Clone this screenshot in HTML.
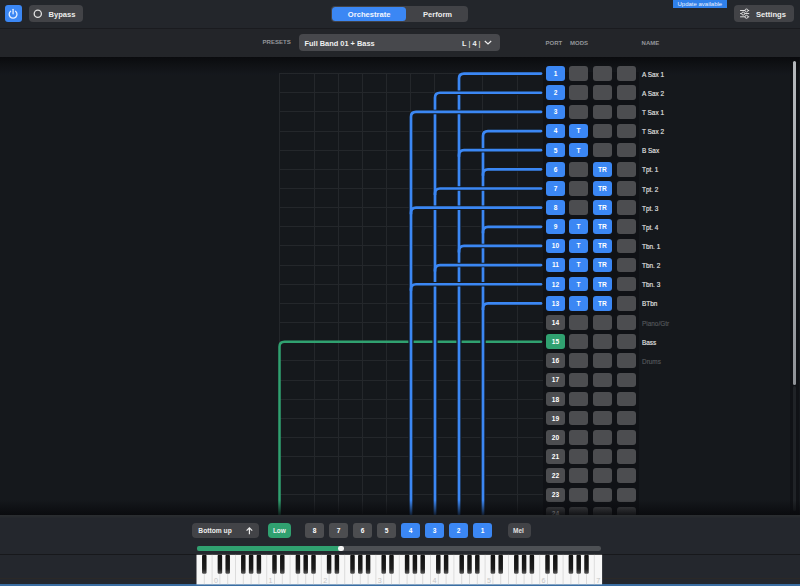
<!DOCTYPE html>
<html><head><meta charset="utf-8"><style>
*{margin:0;padding:0;box-sizing:border-box}
html,body{width:800px;height:586px;overflow:hidden;background:#15181c;font-family:"Liberation Sans",sans-serif}
.a{position:absolute}
.btn{position:absolute;border-radius:4px;background:#424347;color:#ececec;font-weight:bold}
.t{position:absolute;white-space:nowrap;line-height:1}
.pb{position:absolute;width:19px;height:14.6px;border-radius:3px;color:#fff;font-weight:bold;font-size:6.6px;display:flex;align-items:center;justify-content:center}
.nm{position:absolute;left:642px;font-size:7.3px;-webkit-text-stroke:0.15px currentColor;transform:scaleX(0.88);transform-origin:0 0;color:#e4e4e4;line-height:1;white-space:nowrap}
</style></head><body>

<div class="a" style="left:0;top:0;width:800px;height:28px;background:#23262b"></div>
<div class="a" style="left:0;top:28px;width:800px;height:1px;background:#1a1b1f"></div>
<div class="a" style="left:0;top:29px;width:800px;height:28px;background:#232529"></div>
<div class="a" style="left:0;top:57px;width:800px;height:18px;background:linear-gradient(#0a0b0e,#0f1114 40%,#15181d)"></div>
<div class="btn" style="left:5px;top:5px;width:17px;height:17px;border-radius:3px;background:#3b87f4"></div>
<svg class="a" style="left:5px;top:5px" width="17" height="17" viewBox="0 0 17 17"><path d="M5.6 6.3 A3.9 3.9 0 1 0 10.55 6.3" fill="none" stroke="#e6f0ff" stroke-width="1.3" stroke-linecap="round"/><line x1="8.07" y1="4.3" x2="8.07" y2="8.8" stroke="#e6f0ff" stroke-width="1.3" stroke-linecap="round"/></svg>
<div class="btn" style="left:29px;top:5px;width:54px;height:17px"></div>
<svg class="a" style="left:29px;top:5px" width="20" height="17"><circle cx="8.8" cy="8.7" r="3.6" fill="none" stroke="#e0e0e0" stroke-width="1.3"/></svg>
<div class="t" style="left:48.5px;top:10.9px;font-size:7.6px;font-weight:bold;color:#ececec">Bypass</div>
<div class="btn" style="left:331px;top:5.5px;width:137px;height:16.6px"></div>
<div class="btn" style="left:332px;top:6.5px;width:74px;height:14.5px;border-radius:3.5px;background:#3b87f4"></div>
<div class="t" style="left:347.8px;top:10.6px;font-size:7.6px;font-weight:bold;color:#f2f6ff">Orchestrate</div>
<div class="t" style="left:423px;top:10.6px;font-size:7.6px;font-weight:bold;color:#ececec">Perform</div>
<div class="a" style="left:673px;top:0;width:54px;height:8px;background:#2f80ea"></div>
<div class="t" style="left:677.5px;top:1px;font-size:6px;color:#e8f0ff">Update available</div>
<div class="btn" style="left:734px;top:5px;width:60px;height:17px"></div>
<svg class="a" style="left:738px;top:7px" width="13" height="13" viewBox="0 0 13 13" fill="none" stroke="#dedede" stroke-width="1">
<line x1="2.1" y1="3.5" x2="11.2" y2="3.5"/><line x1="2.1" y1="6.55" x2="11.2" y2="6.55"/><line x1="2.1" y1="9.8" x2="11.2" y2="9.8"/>
<circle cx="8.5" cy="3.5" r="1.5" fill="#424347"/><circle cx="5.2" cy="6.55" r="1.5" fill="#424347"/><circle cx="8.5" cy="9.8" r="1.5" fill="#424347"/></svg>
<div class="t" style="left:756px;top:10.8px;font-size:7.6px;font-weight:bold;color:#ececec">Settings</div>
<div class="t" style="left:262.6px;top:39.4px;font-size:6.1px;font-weight:bold;color:#94969a;letter-spacing:-0.05px">PRESETS</div>
<div class="btn" style="left:299px;top:34px;width:201px;height:17px;background:#47484c"></div>
<div class="t" style="left:304.6px;top:40.2px;font-size:7.4px;font-weight:bold;color:#f0f0f0">Full Band 01 + Bass</div>
<div class="t" style="left:462px;top:40.2px;font-size:7.4px;font-weight:bold;color:#f0f0f0">L <span style="font-weight:normal">|</span> 4 <span style="font-weight:normal">|</span></div>
<svg class="a" style="left:482px;top:37px" width="12" height="10"><path d="M2.8 4 L6 7 L9.2 4" fill="none" stroke="#f0f0f0" stroke-width="1.1"/></svg>
<div class="t" style="left:545.6px;top:39.85px;font-size:6px;font-weight:bold;color:#94969a;letter-spacing:0px">PORT</div>
<div class="t" style="left:570px;top:39.85px;font-size:6px;font-weight:bold;color:#94969a;letter-spacing:0px">MODS</div>
<div class="t" style="left:641.6px;top:39.85px;font-size:6px;font-weight:bold;color:#94969a;letter-spacing:0px">NAME</div>
<svg class="a" style="left:0;top:0" width="800" height="586">
<line x1="279.5" y1="73" x2="279.5" y2="515" stroke="#24272b" stroke-width="1"/>
<line x1="314.5" y1="73" x2="314.5" y2="515" stroke="#24272b" stroke-width="1"/>
<line x1="338.5" y1="73" x2="338.5" y2="515" stroke="#24272b" stroke-width="1"/>
<line x1="362.5" y1="73" x2="362.5" y2="515" stroke="#24272b" stroke-width="1"/>
<line x1="386.5" y1="73" x2="386.5" y2="515" stroke="#24272b" stroke-width="1"/>
<line x1="410.5" y1="73" x2="410.5" y2="515" stroke="#24272b" stroke-width="1"/>
<line x1="434.5" y1="73" x2="434.5" y2="515" stroke="#24272b" stroke-width="1"/>
<line x1="458.5" y1="73" x2="458.5" y2="515" stroke="#24272b" stroke-width="1"/>
<line x1="482.5" y1="73" x2="482.5" y2="515" stroke="#24272b" stroke-width="1"/>
<line x1="517.5" y1="73" x2="517.5" y2="515" stroke="#24272b" stroke-width="1"/>
<line x1="279" y1="73.5" x2="543" y2="73.5" stroke="#24272b" stroke-width="1"/>
<line x1="279" y1="92.5" x2="543" y2="92.5" stroke="#24272b" stroke-width="1"/>
<line x1="279" y1="111.5" x2="543" y2="111.5" stroke="#24272b" stroke-width="1"/>
<line x1="279" y1="131.5" x2="543" y2="131.5" stroke="#24272b" stroke-width="1"/>
<line x1="279" y1="150.5" x2="543" y2="150.5" stroke="#24272b" stroke-width="1"/>
<line x1="279" y1="169.5" x2="543" y2="169.5" stroke="#24272b" stroke-width="1"/>
<line x1="279" y1="188.5" x2="543" y2="188.5" stroke="#24272b" stroke-width="1"/>
<line x1="279" y1="207.5" x2="543" y2="207.5" stroke="#24272b" stroke-width="1"/>
<line x1="279" y1="226.5" x2="543" y2="226.5" stroke="#24272b" stroke-width="1"/>
<line x1="279" y1="245.5" x2="543" y2="245.5" stroke="#24272b" stroke-width="1"/>
<line x1="279" y1="265.5" x2="543" y2="265.5" stroke="#24272b" stroke-width="1"/>
<line x1="279" y1="284.5" x2="543" y2="284.5" stroke="#24272b" stroke-width="1"/>
<line x1="279" y1="303.5" x2="543" y2="303.5" stroke="#24272b" stroke-width="1"/>
<line x1="279" y1="322.5" x2="543" y2="322.5" stroke="#24272b" stroke-width="1"/>
<line x1="279" y1="341.5" x2="543" y2="341.5" stroke="#24272b" stroke-width="1"/>
<line x1="279" y1="360.5" x2="543" y2="360.5" stroke="#24272b" stroke-width="1"/>
<line x1="279" y1="380.5" x2="543" y2="380.5" stroke="#24272b" stroke-width="1"/>
<line x1="279" y1="399.5" x2="543" y2="399.5" stroke="#24272b" stroke-width="1"/>
<line x1="279" y1="418.5" x2="543" y2="418.5" stroke="#24272b" stroke-width="1"/>
<line x1="279" y1="437.5" x2="543" y2="437.5" stroke="#24272b" stroke-width="1"/>
<line x1="279" y1="456.5" x2="543" y2="456.5" stroke="#24272b" stroke-width="1"/>
<line x1="279" y1="475.5" x2="543" y2="475.5" stroke="#24272b" stroke-width="1"/>
<line x1="279" y1="494.5" x2="543" y2="494.5" stroke="#24272b" stroke-width="1"/>
<line x1="279" y1="514.5" x2="543" y2="514.5" stroke="#24272b" stroke-width="1"/>
<path d="M541 341.70 H284.50 Q279.50 341.70 279.50 346.70 V515" fill="none" stroke="#30a170" stroke-width="2.5" stroke-linecap="round"/>
<path d="M541 73.60 H465.50 M459.00 80.10 V515" fill="none" stroke="#15181c" stroke-width="4.5"/>
<path d="M541 73.60 H464.00 Q459.00 73.60 459.00 78.60 V515" fill="none" stroke="#3b87f4" stroke-width="2.7" stroke-linecap="round"/>
<path d="M541 92.75 H441.50 M435.00 99.25 V515" fill="none" stroke="#15181c" stroke-width="4.5"/>
<path d="M541 92.75 H440.00 Q435.00 92.75 435.00 97.75 V515" fill="none" stroke="#3b87f4" stroke-width="2.7" stroke-linecap="round"/>
<path d="M541 111.90 H417.50 M411.00 118.40 V515" fill="none" stroke="#15181c" stroke-width="4.5"/>
<path d="M541 111.90 H416.00 Q411.00 111.90 411.00 116.90 V515" fill="none" stroke="#3b87f4" stroke-width="2.7" stroke-linecap="round"/>
<path d="M541 131.05 H489.50 M483.00 137.55 V515" fill="none" stroke="#15181c" stroke-width="4.5"/>
<path d="M541 131.05 H488.00 Q483.00 131.05 483.00 136.05 V515" fill="none" stroke="#3b87f4" stroke-width="2.7" stroke-linecap="round"/>
<path d="M541 150.20 H465.50 M459.00 156.70 V515" fill="none" stroke="#15181c" stroke-width="4.5"/>
<path d="M541 150.20 H464.00 Q459.00 150.20 459.00 155.20 V515" fill="none" stroke="#3b87f4" stroke-width="2.7" stroke-linecap="round"/>
<path d="M541 169.35 H489.50 M483.00 175.85 V515" fill="none" stroke="#15181c" stroke-width="4.5"/>
<path d="M541 169.35 H488.00 Q483.00 169.35 483.00 174.35 V515" fill="none" stroke="#3b87f4" stroke-width="2.7" stroke-linecap="round"/>
<path d="M541 188.50 H441.50 M435.00 195.00 V515" fill="none" stroke="#15181c" stroke-width="4.5"/>
<path d="M541 188.50 H440.00 Q435.00 188.50 435.00 193.50 V515" fill="none" stroke="#3b87f4" stroke-width="2.7" stroke-linecap="round"/>
<path d="M541 207.65 H417.50 M411.00 214.15 V515" fill="none" stroke="#15181c" stroke-width="4.5"/>
<path d="M541 207.65 H416.00 Q411.00 207.65 411.00 212.65 V515" fill="none" stroke="#3b87f4" stroke-width="2.7" stroke-linecap="round"/>
<path d="M541 226.80 H489.50 M483.00 233.30 V515" fill="none" stroke="#15181c" stroke-width="4.5"/>
<path d="M541 226.80 H488.00 Q483.00 226.80 483.00 231.80 V515" fill="none" stroke="#3b87f4" stroke-width="2.7" stroke-linecap="round"/>
<path d="M541 245.95 H465.50 M459.00 252.45 V515" fill="none" stroke="#15181c" stroke-width="4.5"/>
<path d="M541 245.95 H464.00 Q459.00 245.95 459.00 250.95 V515" fill="none" stroke="#3b87f4" stroke-width="2.7" stroke-linecap="round"/>
<path d="M541 265.10 H441.50 M435.00 271.60 V515" fill="none" stroke="#15181c" stroke-width="4.5"/>
<path d="M541 265.10 H440.00 Q435.00 265.10 435.00 270.10 V515" fill="none" stroke="#3b87f4" stroke-width="2.7" stroke-linecap="round"/>
<path d="M541 284.25 H417.50 M411.00 290.75 V515" fill="none" stroke="#15181c" stroke-width="4.5"/>
<path d="M541 284.25 H416.00 Q411.00 284.25 411.00 289.25 V515" fill="none" stroke="#3b87f4" stroke-width="2.7" stroke-linecap="round"/>
<path d="M541 303.40 H489.50 M483.00 309.90 V515" fill="none" stroke="#15181c" stroke-width="4.5"/>
<path d="M541 303.40 H488.00 Q483.00 303.40 483.00 308.40 V515" fill="none" stroke="#3b87f4" stroke-width="2.7" stroke-linecap="round"/>
</svg>
<div class="a" style="left:543px;top:72px;width:96px;height:443px;background:#101216"></div>
<div class="pb" style="left:546px;top:66.20px;background:#3b87f4">1</div>
<div class="pb" style="left:569px;top:66.20px;background:#4c4d50"></div>
<div class="pb" style="left:593px;top:66.20px;background:#4c4d50"></div>
<div class="pb" style="left:617px;top:66.20px;background:#4c4d50"></div>
<div class="nm" style="top:70.63px;color:#e4e4e4">A Sax 1</div>
<div class="pb" style="left:546px;top:85.35px;background:#3b87f4">2</div>
<div class="pb" style="left:569px;top:85.35px;background:#4c4d50"></div>
<div class="pb" style="left:593px;top:85.35px;background:#4c4d50"></div>
<div class="pb" style="left:617px;top:85.35px;background:#4c4d50"></div>
<div class="nm" style="top:89.78px;color:#e4e4e4">A Sax 2</div>
<div class="pb" style="left:546px;top:104.50px;background:#3b87f4">3</div>
<div class="pb" style="left:569px;top:104.50px;background:#4c4d50"></div>
<div class="pb" style="left:593px;top:104.50px;background:#4c4d50"></div>
<div class="pb" style="left:617px;top:104.50px;background:#4c4d50"></div>
<div class="nm" style="top:108.93px;color:#e4e4e4">T Sax 1</div>
<div class="pb" style="left:546px;top:123.65px;background:#3b87f4">4</div>
<div class="pb" style="left:569px;top:123.65px;background:#3b87f4">T</div>
<div class="pb" style="left:593px;top:123.65px;background:#4c4d50"></div>
<div class="pb" style="left:617px;top:123.65px;background:#4c4d50"></div>
<div class="nm" style="top:128.08px;color:#e4e4e4">T Sax 2</div>
<div class="pb" style="left:546px;top:142.80px;background:#3b87f4">5</div>
<div class="pb" style="left:569px;top:142.80px;background:#3b87f4">T</div>
<div class="pb" style="left:593px;top:142.80px;background:#4c4d50"></div>
<div class="pb" style="left:617px;top:142.80px;background:#4c4d50"></div>
<div class="nm" style="top:147.23px;color:#e4e4e4">B Sax</div>
<div class="pb" style="left:546px;top:161.95px;background:#3b87f4">6</div>
<div class="pb" style="left:569px;top:161.95px;background:#4c4d50"></div>
<div class="pb" style="left:593px;top:161.95px;background:#3b87f4">TR</div>
<div class="pb" style="left:617px;top:161.95px;background:#4c4d50"></div>
<div class="nm" style="top:166.38px;color:#e4e4e4">Tpt. 1</div>
<div class="pb" style="left:546px;top:181.10px;background:#3b87f4">7</div>
<div class="pb" style="left:569px;top:181.10px;background:#4c4d50"></div>
<div class="pb" style="left:593px;top:181.10px;background:#3b87f4">TR</div>
<div class="pb" style="left:617px;top:181.10px;background:#4c4d50"></div>
<div class="nm" style="top:185.53px;color:#e4e4e4">Tpt. 2</div>
<div class="pb" style="left:546px;top:200.25px;background:#3b87f4">8</div>
<div class="pb" style="left:569px;top:200.25px;background:#4c4d50"></div>
<div class="pb" style="left:593px;top:200.25px;background:#3b87f4">TR</div>
<div class="pb" style="left:617px;top:200.25px;background:#4c4d50"></div>
<div class="nm" style="top:204.68px;color:#e4e4e4">Tpt. 3</div>
<div class="pb" style="left:546px;top:219.40px;background:#3b87f4">9</div>
<div class="pb" style="left:569px;top:219.40px;background:#3b87f4">T</div>
<div class="pb" style="left:593px;top:219.40px;background:#3b87f4">TR</div>
<div class="pb" style="left:617px;top:219.40px;background:#4c4d50"></div>
<div class="nm" style="top:223.83px;color:#e4e4e4">Tpt. 4</div>
<div class="pb" style="left:546px;top:238.55px;background:#3b87f4">10</div>
<div class="pb" style="left:569px;top:238.55px;background:#3b87f4">T</div>
<div class="pb" style="left:593px;top:238.55px;background:#3b87f4">TR</div>
<div class="pb" style="left:617px;top:238.55px;background:#4c4d50"></div>
<div class="nm" style="top:242.98px;color:#e4e4e4">Tbn. 1</div>
<div class="pb" style="left:546px;top:257.70px;background:#3b87f4">11</div>
<div class="pb" style="left:569px;top:257.70px;background:#3b87f4">T</div>
<div class="pb" style="left:593px;top:257.70px;background:#3b87f4">TR</div>
<div class="pb" style="left:617px;top:257.70px;background:#4c4d50"></div>
<div class="nm" style="top:262.13px;color:#e4e4e4">Tbn. 2</div>
<div class="pb" style="left:546px;top:276.85px;background:#3b87f4">12</div>
<div class="pb" style="left:569px;top:276.85px;background:#3b87f4">T</div>
<div class="pb" style="left:593px;top:276.85px;background:#3b87f4">TR</div>
<div class="pb" style="left:617px;top:276.85px;background:#4c4d50"></div>
<div class="nm" style="top:281.28px;color:#e4e4e4">Tbn. 3</div>
<div class="pb" style="left:546px;top:296.00px;background:#3b87f4">13</div>
<div class="pb" style="left:569px;top:296.00px;background:#3b87f4">T</div>
<div class="pb" style="left:593px;top:296.00px;background:#3b87f4">TR</div>
<div class="pb" style="left:617px;top:296.00px;background:#4c4d50"></div>
<div class="nm" style="top:300.43px;color:#e4e4e4">BTbn</div>
<div class="pb" style="left:546px;top:315.15px;background:#4c4d50">14</div>
<div class="pb" style="left:569px;top:315.15px;background:#4c4d50"></div>
<div class="pb" style="left:593px;top:315.15px;background:#4c4d50"></div>
<div class="pb" style="left:617px;top:315.15px;background:#4c4d50"></div>
<div class="nm" style="top:319.58px;color:#55585c">Piano/Gtr</div>
<div class="pb" style="left:546px;top:334.30px;background:#30a170">15</div>
<div class="pb" style="left:569px;top:334.30px;background:#4c4d50"></div>
<div class="pb" style="left:593px;top:334.30px;background:#4c4d50"></div>
<div class="pb" style="left:617px;top:334.30px;background:#4c4d50"></div>
<div class="nm" style="top:338.73px;color:#e4e4e4">Bass</div>
<div class="pb" style="left:546px;top:353.45px;background:#4c4d50">16</div>
<div class="pb" style="left:569px;top:353.45px;background:#4c4d50"></div>
<div class="pb" style="left:593px;top:353.45px;background:#4c4d50"></div>
<div class="pb" style="left:617px;top:353.45px;background:#4c4d50"></div>
<div class="nm" style="top:357.88px;color:#55585c">Drums</div>
<div class="pb" style="left:546px;top:372.60px;background:#4c4d50">17</div>
<div class="pb" style="left:569px;top:372.60px;background:#4c4d50"></div>
<div class="pb" style="left:593px;top:372.60px;background:#4c4d50"></div>
<div class="pb" style="left:617px;top:372.60px;background:#4c4d50"></div>
<div class="pb" style="left:546px;top:391.75px;background:#4c4d50">18</div>
<div class="pb" style="left:569px;top:391.75px;background:#4c4d50"></div>
<div class="pb" style="left:593px;top:391.75px;background:#4c4d50"></div>
<div class="pb" style="left:617px;top:391.75px;background:#4c4d50"></div>
<div class="pb" style="left:546px;top:410.90px;background:#4c4d50">19</div>
<div class="pb" style="left:569px;top:410.90px;background:#4c4d50"></div>
<div class="pb" style="left:593px;top:410.90px;background:#4c4d50"></div>
<div class="pb" style="left:617px;top:410.90px;background:#4c4d50"></div>
<div class="pb" style="left:546px;top:430.05px;background:#4c4d50">20</div>
<div class="pb" style="left:569px;top:430.05px;background:#4c4d50"></div>
<div class="pb" style="left:593px;top:430.05px;background:#4c4d50"></div>
<div class="pb" style="left:617px;top:430.05px;background:#4c4d50"></div>
<div class="pb" style="left:546px;top:449.20px;background:#4c4d50">21</div>
<div class="pb" style="left:569px;top:449.20px;background:#4c4d50"></div>
<div class="pb" style="left:593px;top:449.20px;background:#4c4d50"></div>
<div class="pb" style="left:617px;top:449.20px;background:#4c4d50"></div>
<div class="pb" style="left:546px;top:468.35px;background:#4c4d50">22</div>
<div class="pb" style="left:569px;top:468.35px;background:#4c4d50"></div>
<div class="pb" style="left:593px;top:468.35px;background:#4c4d50"></div>
<div class="pb" style="left:617px;top:468.35px;background:#4c4d50"></div>
<div class="pb" style="left:546px;top:487.50px;background:#4c4d50">23</div>
<div class="pb" style="left:569px;top:487.50px;background:#4c4d50"></div>
<div class="pb" style="left:593px;top:487.50px;background:#4c4d50"></div>
<div class="pb" style="left:617px;top:487.50px;background:#4c4d50"></div>
<div class="pb" style="left:546px;top:506.65px;background:#4c4d50">24</div>
<div class="pb" style="left:569px;top:506.65px;background:#4c4d50"></div>
<div class="pb" style="left:593px;top:506.65px;background:#4c4d50"></div>
<div class="pb" style="left:617px;top:506.65px;background:#4c4d50"></div>
<div class="a" style="left:790px;top:57px;width:9px;height:458px;background:rgba(8,9,12,0.35)"></div>
<div class="a" style="left:793px;top:61px;width:3.2px;height:324px;border-radius:1.6px;background:linear-gradient(#b4b7bb,#8f9297)"></div>
<div class="a" style="left:793px;top:386px;width:3.2px;height:125px;border-radius:1.6px;background:#202327"></div>
<div class="a" style="left:0;top:514.5px;width:800px;height:72px;background:#24272d"></div><div class="a" style="left:0;top:514.5px;width:800px;height:3.5px;background:linear-gradient(#2b2e31,#25282d)"></div><div class="a" style="left:0;top:578px;width:800px;height:1px;background:#2a2827"></div>
<div class="a" style="left:0;top:500px;width:800px;height:14.5px;background:linear-gradient(rgba(8,9,12,0),rgba(8,9,12,0.85))"></div>
<div class="a" style="left:0;top:554px;width:800px;height:1px;background:#17181b"></div>
<div class="a" style="left:0;top:584px;width:800px;height:2.3px;background:#3a6ea3"></div>
<div class="btn" style="left:192px;top:523px;width:67px;height:14.5px"></div>
<div class="t" style="left:198.3px;top:527.6px;font-size:6.7px;font-weight:bold;color:#ececec">Bottom up</div>
<svg class="a" style="left:244px;top:524px" width="10" height="12"><path d="M5.4 10.2 V4 M2.6 6.6 L5.4 3.8 L8.2 6.6" fill="none" stroke="#ececec" stroke-width="1.2"/></svg>
<div class="btn" style="left:268px;top:523px;width:23px;height:14.5px;background:#30a170"></div>
<div class="t" style="left:272.9px;top:527.8px;font-size:6.5px;font-weight:bold;color:#f0f0f0">Low</div>
<div class="pb" style="left:305px;top:523px;height:14.5px;background:#4c4d50">8</div>
<div class="pb" style="left:329px;top:523px;height:14.5px;background:#4c4d50">7</div>
<div class="pb" style="left:353px;top:523px;height:14.5px;background:#4c4d50">6</div>
<div class="pb" style="left:377px;top:523px;height:14.5px;background:#4c4d50">5</div>
<div class="pb" style="left:401px;top:523px;height:14.5px;background:#3b87f4">4</div>
<div class="pb" style="left:425px;top:523px;height:14.5px;background:#3b87f4">3</div>
<div class="pb" style="left:449px;top:523px;height:14.5px;background:#3b87f4">2</div>
<div class="pb" style="left:473px;top:523px;height:14.5px;background:#3b87f4">1</div>
<div class="btn" style="left:507.5px;top:523px;width:23px;height:14.5px"></div>
<div class="t" style="left:513px;top:527.8px;font-size:6.5px;font-weight:bold;color:#e0e0e0">Mel</div>
<div class="a" style="left:197px;top:546.3px;width:404px;height:4.5px;border-radius:2.25px;background:#4d5054"></div>
<div class="a" style="left:197px;top:546.3px;width:144px;height:4.5px;border-radius:2.25px;background:#30a170"></div>
<div class="a" style="left:337.6px;top:546.1px;width:6.6px;height:4.8px;border-radius:2.2px;background:#f4f4f4"></div>
<svg class="a" style="left:0;top:0" width="800" height="586">
<rect x="196.5" y="554.8" width="405.59999999999997" height="29.600000000000023" fill="#f7f7f7"/>
<line x1="204.30" y1="554.8" x2="204.30" y2="584.4" stroke="#c9c9c9" stroke-width="0.6"/>
<line x1="212.10" y1="554.8" x2="212.10" y2="584.4" stroke="#c9c9c9" stroke-width="0.6"/>
<line x1="219.90" y1="554.8" x2="219.90" y2="584.4" stroke="#c9c9c9" stroke-width="0.6"/>
<line x1="227.70" y1="554.8" x2="227.70" y2="584.4" stroke="#c9c9c9" stroke-width="0.6"/>
<line x1="235.50" y1="554.8" x2="235.50" y2="584.4" stroke="#c9c9c9" stroke-width="0.6"/>
<line x1="243.30" y1="554.8" x2="243.30" y2="584.4" stroke="#c9c9c9" stroke-width="0.6"/>
<line x1="251.10" y1="554.8" x2="251.10" y2="584.4" stroke="#c9c9c9" stroke-width="0.6"/>
<line x1="258.90" y1="554.8" x2="258.90" y2="584.4" stroke="#c9c9c9" stroke-width="0.6"/>
<line x1="266.70" y1="554.8" x2="266.70" y2="584.4" stroke="#c9c9c9" stroke-width="0.6"/>
<line x1="274.50" y1="554.8" x2="274.50" y2="584.4" stroke="#c9c9c9" stroke-width="0.6"/>
<line x1="282.30" y1="554.8" x2="282.30" y2="584.4" stroke="#c9c9c9" stroke-width="0.6"/>
<line x1="290.10" y1="554.8" x2="290.10" y2="584.4" stroke="#c9c9c9" stroke-width="0.6"/>
<line x1="297.90" y1="554.8" x2="297.90" y2="584.4" stroke="#c9c9c9" stroke-width="0.6"/>
<line x1="305.70" y1="554.8" x2="305.70" y2="584.4" stroke="#c9c9c9" stroke-width="0.6"/>
<line x1="313.50" y1="554.8" x2="313.50" y2="584.4" stroke="#c9c9c9" stroke-width="0.6"/>
<line x1="321.30" y1="554.8" x2="321.30" y2="584.4" stroke="#c9c9c9" stroke-width="0.6"/>
<line x1="329.10" y1="554.8" x2="329.10" y2="584.4" stroke="#c9c9c9" stroke-width="0.6"/>
<line x1="336.90" y1="554.8" x2="336.90" y2="584.4" stroke="#c9c9c9" stroke-width="0.6"/>
<line x1="344.70" y1="554.8" x2="344.70" y2="584.4" stroke="#c9c9c9" stroke-width="0.6"/>
<line x1="352.50" y1="554.8" x2="352.50" y2="584.4" stroke="#c9c9c9" stroke-width="0.6"/>
<line x1="360.30" y1="554.8" x2="360.30" y2="584.4" stroke="#c9c9c9" stroke-width="0.6"/>
<line x1="368.10" y1="554.8" x2="368.10" y2="584.4" stroke="#c9c9c9" stroke-width="0.6"/>
<line x1="375.90" y1="554.8" x2="375.90" y2="584.4" stroke="#c9c9c9" stroke-width="0.6"/>
<line x1="383.70" y1="554.8" x2="383.70" y2="584.4" stroke="#c9c9c9" stroke-width="0.6"/>
<line x1="391.50" y1="554.8" x2="391.50" y2="584.4" stroke="#c9c9c9" stroke-width="0.6"/>
<line x1="399.30" y1="554.8" x2="399.30" y2="584.4" stroke="#c9c9c9" stroke-width="0.6"/>
<line x1="407.10" y1="554.8" x2="407.10" y2="584.4" stroke="#c9c9c9" stroke-width="0.6"/>
<line x1="414.90" y1="554.8" x2="414.90" y2="584.4" stroke="#c9c9c9" stroke-width="0.6"/>
<line x1="422.70" y1="554.8" x2="422.70" y2="584.4" stroke="#c9c9c9" stroke-width="0.6"/>
<line x1="430.50" y1="554.8" x2="430.50" y2="584.4" stroke="#c9c9c9" stroke-width="0.6"/>
<line x1="438.30" y1="554.8" x2="438.30" y2="584.4" stroke="#c9c9c9" stroke-width="0.6"/>
<line x1="446.10" y1="554.8" x2="446.10" y2="584.4" stroke="#c9c9c9" stroke-width="0.6"/>
<line x1="453.90" y1="554.8" x2="453.90" y2="584.4" stroke="#c9c9c9" stroke-width="0.6"/>
<line x1="461.70" y1="554.8" x2="461.70" y2="584.4" stroke="#c9c9c9" stroke-width="0.6"/>
<line x1="469.50" y1="554.8" x2="469.50" y2="584.4" stroke="#c9c9c9" stroke-width="0.6"/>
<line x1="477.30" y1="554.8" x2="477.30" y2="584.4" stroke="#c9c9c9" stroke-width="0.6"/>
<line x1="485.10" y1="554.8" x2="485.10" y2="584.4" stroke="#c9c9c9" stroke-width="0.6"/>
<line x1="492.90" y1="554.8" x2="492.90" y2="584.4" stroke="#c9c9c9" stroke-width="0.6"/>
<line x1="500.70" y1="554.8" x2="500.70" y2="584.4" stroke="#c9c9c9" stroke-width="0.6"/>
<line x1="508.50" y1="554.8" x2="508.50" y2="584.4" stroke="#c9c9c9" stroke-width="0.6"/>
<line x1="516.30" y1="554.8" x2="516.30" y2="584.4" stroke="#c9c9c9" stroke-width="0.6"/>
<line x1="524.10" y1="554.8" x2="524.10" y2="584.4" stroke="#c9c9c9" stroke-width="0.6"/>
<line x1="531.90" y1="554.8" x2="531.90" y2="584.4" stroke="#c9c9c9" stroke-width="0.6"/>
<line x1="539.70" y1="554.8" x2="539.70" y2="584.4" stroke="#c9c9c9" stroke-width="0.6"/>
<line x1="547.50" y1="554.8" x2="547.50" y2="584.4" stroke="#c9c9c9" stroke-width="0.6"/>
<line x1="555.30" y1="554.8" x2="555.30" y2="584.4" stroke="#c9c9c9" stroke-width="0.6"/>
<line x1="563.10" y1="554.8" x2="563.10" y2="584.4" stroke="#c9c9c9" stroke-width="0.6"/>
<line x1="570.90" y1="554.8" x2="570.90" y2="584.4" stroke="#c9c9c9" stroke-width="0.6"/>
<line x1="578.70" y1="554.8" x2="578.70" y2="584.4" stroke="#c9c9c9" stroke-width="0.6"/>
<line x1="586.50" y1="554.8" x2="586.50" y2="584.4" stroke="#c9c9c9" stroke-width="0.6"/>
<line x1="594.30" y1="554.8" x2="594.30" y2="584.4" stroke="#c9c9c9" stroke-width="0.6"/>
<defs><linearGradient id="bk" x1="0" y1="0" x2="0" y2="1"><stop offset="0" stop-color="#111"/><stop offset="0.75" stop-color="#1c1c1c"/><stop offset="1" stop-color="#555"/></linearGradient></defs>
<rect x="202.05" y="554.8" width="4.5" height="19" rx="1.2" fill="url(#bk)"/>
<rect x="217.65" y="554.8" width="4.5" height="19" rx="1.2" fill="url(#bk)"/>
<rect x="225.45" y="554.8" width="4.5" height="19" rx="1.2" fill="url(#bk)"/>
<rect x="241.05" y="554.8" width="4.5" height="19" rx="1.2" fill="url(#bk)"/>
<rect x="248.85" y="554.8" width="4.5" height="19" rx="1.2" fill="url(#bk)"/>
<rect x="256.65" y="554.8" width="4.5" height="19" rx="1.2" fill="url(#bk)"/>
<rect x="272.25" y="554.8" width="4.5" height="19" rx="1.2" fill="url(#bk)"/>
<rect x="280.05" y="554.8" width="4.5" height="19" rx="1.2" fill="url(#bk)"/>
<rect x="295.65" y="554.8" width="4.5" height="19" rx="1.2" fill="url(#bk)"/>
<rect x="303.45" y="554.8" width="4.5" height="19" rx="1.2" fill="url(#bk)"/>
<rect x="311.25" y="554.8" width="4.5" height="19" rx="1.2" fill="url(#bk)"/>
<rect x="326.85" y="554.8" width="4.5" height="19" rx="1.2" fill="url(#bk)"/>
<rect x="334.65" y="554.8" width="4.5" height="19" rx="1.2" fill="url(#bk)"/>
<rect x="350.25" y="554.8" width="4.5" height="19" rx="1.2" fill="url(#bk)"/>
<rect x="358.05" y="554.8" width="4.5" height="19" rx="1.2" fill="url(#bk)"/>
<rect x="365.85" y="554.8" width="4.5" height="19" rx="1.2" fill="url(#bk)"/>
<rect x="381.45" y="554.8" width="4.5" height="19" rx="1.2" fill="url(#bk)"/>
<rect x="389.25" y="554.8" width="4.5" height="19" rx="1.2" fill="url(#bk)"/>
<rect x="404.85" y="554.8" width="4.5" height="19" rx="1.2" fill="url(#bk)"/>
<rect x="412.65" y="554.8" width="4.5" height="19" rx="1.2" fill="url(#bk)"/>
<rect x="420.45" y="554.8" width="4.5" height="19" rx="1.2" fill="url(#bk)"/>
<rect x="436.05" y="554.8" width="4.5" height="19" rx="1.2" fill="url(#bk)"/>
<rect x="443.85" y="554.8" width="4.5" height="19" rx="1.2" fill="url(#bk)"/>
<rect x="459.45" y="554.8" width="4.5" height="19" rx="1.2" fill="url(#bk)"/>
<rect x="467.25" y="554.8" width="4.5" height="19" rx="1.2" fill="url(#bk)"/>
<rect x="475.05" y="554.8" width="4.5" height="19" rx="1.2" fill="url(#bk)"/>
<rect x="490.65" y="554.8" width="4.5" height="19" rx="1.2" fill="url(#bk)"/>
<rect x="498.45" y="554.8" width="4.5" height="19" rx="1.2" fill="url(#bk)"/>
<rect x="514.05" y="554.8" width="4.5" height="19" rx="1.2" fill="url(#bk)"/>
<rect x="521.85" y="554.8" width="4.5" height="19" rx="1.2" fill="url(#bk)"/>
<rect x="529.65" y="554.8" width="4.5" height="19" rx="1.2" fill="url(#bk)"/>
<rect x="545.25" y="554.8" width="4.5" height="19" rx="1.2" fill="url(#bk)"/>
<rect x="553.05" y="554.8" width="4.5" height="19" rx="1.2" fill="url(#bk)"/>
<rect x="568.65" y="554.8" width="4.5" height="19" rx="1.2" fill="url(#bk)"/>
<rect x="576.45" y="554.8" width="4.5" height="19" rx="1.2" fill="url(#bk)"/>
<rect x="584.25" y="554.8" width="4.5" height="19" rx="1.2" fill="url(#bk)"/>
<text x="216.00" y="582.6" font-size="7.2" fill="#c6c6c6" text-anchor="middle" font-family="Liberation Sans">0</text>
<text x="270.60" y="582.6" font-size="7.2" fill="#c6c6c6" text-anchor="middle" font-family="Liberation Sans">1</text>
<text x="325.20" y="582.6" font-size="7.2" fill="#c6c6c6" text-anchor="middle" font-family="Liberation Sans">2</text>
<text x="379.80" y="582.6" font-size="7.2" fill="#c6c6c6" text-anchor="middle" font-family="Liberation Sans">3</text>
<text x="434.40" y="582.6" font-size="7.2" fill="#c6c6c6" text-anchor="middle" font-family="Liberation Sans">4</text>
<text x="489.00" y="582.6" font-size="7.2" fill="#c6c6c6" text-anchor="middle" font-family="Liberation Sans">5</text>
<text x="543.60" y="582.6" font-size="7.2" fill="#c6c6c6" text-anchor="middle" font-family="Liberation Sans">6</text>
<text x="598.20" y="582.6" font-size="7.2" fill="#c6c6c6" text-anchor="middle" font-family="Liberation Sans">7</text>
</svg>
</body></html>
